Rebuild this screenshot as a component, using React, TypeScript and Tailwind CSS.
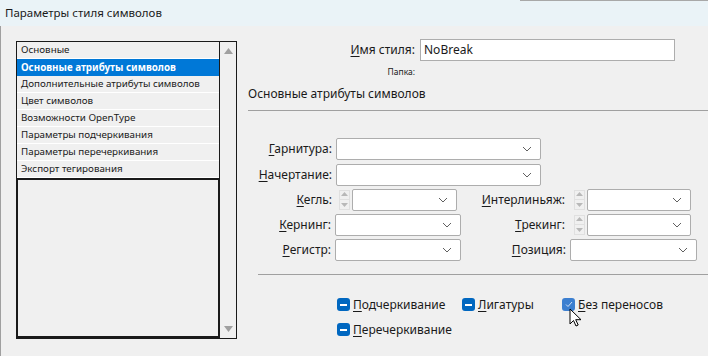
import React from 'react';

const font = { fontFamily: '"Noto Sans", "Open Sans", sans-serif' };

const items = [
  'Основные',
  'Основные атрибуты символов',
  'Дополнительные атрибуты символов',
  'Цвет символов',
  'Возможности OpenType',
  'Параметры подчеркивания',
  'Параметры перечеркивания',
  'Экспорт тегирования',
];

const Chevron = () => (
  <svg width="10" height="6" viewBox="0 0 10 6" className="shrink-0">
    <path d="M1 1l4 4 4-4" fill="none" stroke="#606060" strokeWidth="1" />
  </svg>
);

const Select = ({ w }: { w: string }) => (
  <div className={`${w} h-[22px] bg-white border border-[#adadad] rounded-[2px] flex items-center justify-end pr-[8px] shrink-0`}>
    <Chevron />
  </div>
);

const Spin = () => (
  <div className="w-[11px] h-[20px] border border-[#e0e0e0] flex flex-col items-center justify-around mr-[2px] shrink-0">
    <svg width="7" height="4" viewBox="0 0 7 4"><path d="M0 4L3.5 0 7 4z" fill="#b8b8b8" /></svg>
    <div className="w-full h-px bg-[#e0e0e0]" />
    <svg width="7" height="4" viewBox="0 0 7 4"><path d="M0 0L3.5 4 7 0z" fill="#b8b8b8" /></svg>
  </div>
);

const Label = ({ first, rest, w }: { first: string; rest: string; w: string }) => (
  <div className={`${w} text-right text-[12px] text-[#1a1a1a] pr-[4px] shrink-0`}>
    <span className="underline underline-offset-2">{first}</span>
    {rest}
  </div>
);

const Check = ({ checked, first, rest }: { checked?: boolean; first: string; rest: string }) => (
  <div className="flex items-center gap-[3px]">
    <div className={`w-[13px] h-[13px] rounded-[3px] flex items-center justify-center ${checked ? 'bg-[#3c7fd0]' : 'bg-[#0067c0]'}`}>
      {checked ? (
        <svg width="8" height="7" viewBox="0 0 8 7"><path d="M1 3.5l2 2L7 1" fill="none" stroke="#cfe0f5" strokeWidth="1" /></svg>
      ) : (
        <div className="w-[7px] h-[1.5px] bg-white" />
      )}
    </div>
    <span className="text-[12px] text-[#1a1a1a]">
      <span className="underline underline-offset-2">{first}</span>
      {rest}
    </span>
  </div>
);

export default function App() {
  return (
    <div className="w-[708px] h-[356px] bg-[#f0f0f0] overflow-hidden" style={font}>
      {/* Title bar */}
      <div className="h-[26px] bg-[#eaf3f7] flex items-center pl-[5px] text-[11.5px] text-[#1a1a1a] relative">
        <div className="absolute top-0 right-0 w-[188px] h-px bg-[#a8a8a8]" />
        Параметры стиля символов
      </div>

      <div className="flex h-[330px] border-l border-[#a0a0a0] pt-[15px] pl-[15px]">
        {/* Left list */}
        <div className="w-[221px] h-[298px] border border-[#1a1a1a] flex shrink-0">
          <div className="flex-1 flex flex-col">
            {items.map((it, i) => (
              <div
                key={it}
                className={`h-[17px] flex items-center pl-[4px] text-[9.8px] leading-none ${
                  i === 1 ? 'bg-[#0078d7] text-white font-bold' : 'text-[#1a1a1a] border-b border-white'
                }`}
              >
                {it}
              </div>
            ))}
            <div className="flex-1 border-2 border-[#1a1a1a] border-r-1 -ml-px" />
          </div>
          <div className="w-[17px] border-l border-[#1a1a1a] flex flex-col items-center justify-between py-[6px]">
            <svg width="9" height="6" viewBox="0 0 9 6"><path d="M0 6L4.5 0 9 6z" fill="#a0a0a0" /></svg>
            <svg width="9" height="6" viewBox="0 0 9 6"><path d="M0 0L4.5 6 9 0z" fill="#a0a0a0" /></svg>
          </div>
        </div>

        {/* Right panel */}
        <div className="flex-1 ml-[11px] flex flex-col">
          <div className="flex items-center -mt-[2px]">
            <div className="w-[167px] text-right text-[12px] text-[#1a1a1a]">
              <span className="underline underline-offset-2">И</span>мя стиля:
            </div>
            <div className="ml-[5px] w-[255px] h-[22px] bg-white border border-[#adadad] flex items-center pl-[3px] text-[12px] text-[#1a1a1a]">
              NoBreak
            </div>
          </div>
          <div className="w-[167px] text-right text-[8.5px] text-[#1a1a1a] mt-[5px]">Папка:</div>
          <div className="text-[12px] text-[#1a1a1a] mt-[6px]">Основные атрибуты символов</div>
          <div className="h-px bg-[#a0a0a0] mt-[7px]" />

          <div className="flex flex-col mt-[27px]">
            <div className="flex items-center">
              <Label w="w-[88px]" first="Г" rest="арнитура:" />
              <Select w="w-[205px]" />
            </div>
            <div className="flex items-center mt-[4px]">
              <Label w="w-[88px]" first="Н" rest="ачертание:" />
              <Select w="w-[205px]" />
            </div>
            <div className="flex items-center mt-[3px]">
              <div className="flex items-center w-[222px] shrink-0">
                <Label w="w-[88px]" first="К" rest="егль:" />
                <div className="ml-[3px]"><Spin /></div>
                <Select w="w-[105px]" />
              </div>
              <Label w="w-[99px]" first="И" rest="нтерлиньяж:" />
              <div className="ml-[5px] flex items-center">
                <Spin />
                <Select w="w-[104px]" />
              </div>
            </div>
            <div className="flex items-center mt-[3px]">
              <div className="flex items-center w-[222px] shrink-0">
                <Label w="w-[87px]" first="К" rest="ернинг:" />
                <Select w="w-[126px]" />
              </div>
              <Label w="w-[99px]" first="Т" rest="рекинг:" />
              <div className="ml-[5px] flex items-center">
                <Spin />
                <Select w="w-[104px]" />
              </div>
            </div>
            <div className="flex items-center mt-[3px]">
              <div className="flex items-center w-[222px] shrink-0">
                <Label w="w-[87px]" first="Р" rest="егистр:" />
                <Select w="w-[126px]" />
              </div>
              <Label w="w-[100px]" first="П" rest="озиция:" />
              <Select w="w-[127px]" />
            </div>
          </div>

          <div className="h-px bg-[#a0a0a0] mt-[13px] ml-[10px]" />

          <div className="relative mt-[21px] ml-[89px] flex flex-col gap-[7px]">
            <div className="flex items-center">
              <div className="w-[125px]"><Check first="П" rest="одчеркивание" /></div>
              <div className="w-[100px]"><Check first="Л" rest="игатуры" /></div>
              <Check checked first="Б" rest="ез переносов" />
            </div>
            <Check first="П" rest="еречеркивание" />
            <svg className="absolute left-[232px] top-[12px]" width="14" height="20" viewBox="0 0 14 20">
              <path d="M1 1v15l3.5-3.5 2.5 5.5 2.2-1-2.5-5.3H12z" fill="#fff" stroke="#000" strokeWidth="1" strokeLinejoin="round" />
            </svg>
          </div>
        </div>
      </div>
    </div>
  );
}
